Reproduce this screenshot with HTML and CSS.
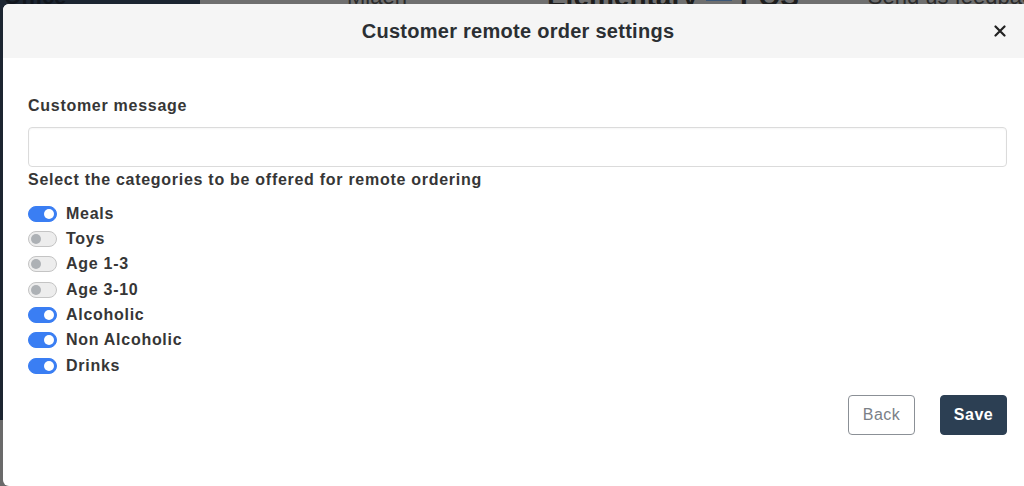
FILE: index.html
```html
<!DOCTYPE html>
<html>
<head>
<meta charset="utf-8">
<link rel="stylesheet" href="styles.css">
</head>
<body>
<div class="app">
  <aside class="side">
    <div class="side-top">Office</div>
    <div class="side-bottom"></div>
  </aside>
  <main class="main">
    <div class="topbar">
      <span class="tb-user">Miaen</span>
      <span class="tb-brand">Elementary <span class="tb-logo"></span> POS</span>
      <span class="tb-feedback">Send us feedback</span>
    </div>
  </main>
</div>

<div class="modal">
  <header class="modal-head">
    <h1 class="modal-title">Customer remote order settings</h1>
    <button class="close" aria-label="close">
      <svg width="12" height="12" viewBox="0 0 12 12"><path d="M1.5 1.5 L10.5 10.5 M10.5 1.5 L1.5 10.5" stroke="#222" stroke-width="2.2" stroke-linecap="round"/></svg>
    </button>
  </header>
  <section class="modal-body">
    <label class="label">Customer message</label>
    <input class="input" type="text">
    <p class="label select-label">Select the categories to be offered for remote ordering</p>
    <ul class="toggles">
      <li class="row"><span class="switch on"></span><span>Meals</span></li>
      <li class="row"><span class="switch"></span><span>Toys</span></li>
      <li class="row"><span class="switch"></span><span>Age 1-3</span></li>
      <li class="row"><span class="switch"></span><span>Age 3-10</span></li>
      <li class="row"><span class="switch on"></span><span>Alcoholic</span></li>
      <li class="row"><span class="switch on"></span><span>Non Alcoholic</span></li>
      <li class="row"><span class="switch on"></span><span>Drinks</span></li>
    </ul>
    <div class="actions">
      <button class="btn back">Back</button>
      <button class="btn save">Save</button>
    </div>
  </section>
</div>
</body>
</html>
```

FILE: styles.css
```css
* { box-sizing: border-box; }
html, body { margin: 0; height: 486px; overflow: hidden; }
body {
  font-family: "Liberation Sans", Arial, sans-serif;
  background: #6e6e6e;
  color: #363636;
}
.app { display: flex; height: 486px; }
.side {
  width: 200px;
  background: #1c2531;
  display: flex;
  flex-direction: column;
}
.side-top {
  color: #11161d;
  font-size: 22px;
  font-weight: bold;
  margin-top: -16px;
  padding-left: 4px;
  flex: 1;
}
.side-bottom { height: 66px; background: #6a6a6a; }
.main { flex: 1; background: #6f6f6f; }
.topbar {
  display: flex;
  align-items: center;
  margin-top: -15px;
  height: 24px;
  color: #1e1e1e;
  font-size: 22px;
}
.tb-user { margin-left: 147px; color: #2b2b2b; }
.tb-brand { margin-left: 140px; font-weight: bold; font-size: 28px; display: flex; align-items: center; gap: 8px; }
.tb-logo { display: inline-block; width: 26px; height: 8px; background: #3c5777; }
.tb-feedback { margin-left: auto; margin-right: -20px; color: #2b2b2b; }

.modal {
  position: absolute;
  left: 3px;
  top: 4px;
  width: 1030px;
  height: 482px;
  background: #fff;
  border-radius: 6px;
  overflow: hidden;
}
.modal-head {
  height: 54px;
  padding-top: 1px;
  background: #f5f5f5;
  display: flex;
  align-items: center;
  justify-content: center;
  position: relative;
}
.modal-title {
  margin: 0;
  font-size: 20px;
  font-weight: bold;
  letter-spacing: 0.27px;
  color: #2b2f33;
}
.close {
  position: absolute;
  right: 27px;
  top: 21px;
  border: 0;
  background: none;
  padding: 0;
  width: 12px;
  height: 12px;
  display: flex;
}
.modal-body {
  padding: 36px 26px 0 25px;
  display: flex;
  flex-direction: column;
}
.label {
  display: block;
  margin: 0;
  font-size: 16px;
  font-weight: bold;
  letter-spacing: 0.72px;
  line-height: 24px;
  color: #363636;
}
.input {
  margin-top: 9px;
  height: 40px;
  width: 100%;
  border: 1px solid #dbdbdb;
  border-radius: 4px;
  background: #fff;
  box-shadow: inset 0 1px 2px rgba(10,10,10,0.04);
}
.select-label { margin-top: 1px; }
.toggles {
  list-style: none;
  margin: 9px 0 0 0;
  padding: 0;
}
.row {
  height: 25.33px;
  display: flex;
  align-items: center;
  gap: 9px;
  font-size: 16px;
  font-weight: bold;
  letter-spacing: 0.72px;
  color: #363636;
}
.switch {
  width: 29px;
  height: 16px;
  border-radius: 8px;
  border: 1px solid #c4c4c4;
  background: #ededed;
  position: relative;
  flex: none;
}
.switch::after {
  content: "";
  position: absolute;
  left: 2px;
  top: 2px;
  width: 10px;
  height: 10px;
  border-radius: 50%;
  background: #adb1b5;
}
.switch.on { background: #3a7ef3; border-color: #3a7ef3; }
.switch.on::after { left: auto; right: 2px; background: #fff; }
.actions {
  margin-top: 17px;
  display: flex;
  justify-content: flex-end;
  gap: 25px;
}
.btn {
  height: 40px;
  width: 67px;
  border-radius: 4px;
  font-family: "Liberation Sans", Arial, sans-serif;
  font-size: 16px;
  letter-spacing: 0.5px;
  padding: 0;
}
.back {
  background: #fff;
  border: 1px solid #8b9096;
  color: #7a8087;
}
.save {
  background: #2c3f53;
  border: 1px solid #2c3f53;
  color: #fff;
  font-weight: bold;
}
```
